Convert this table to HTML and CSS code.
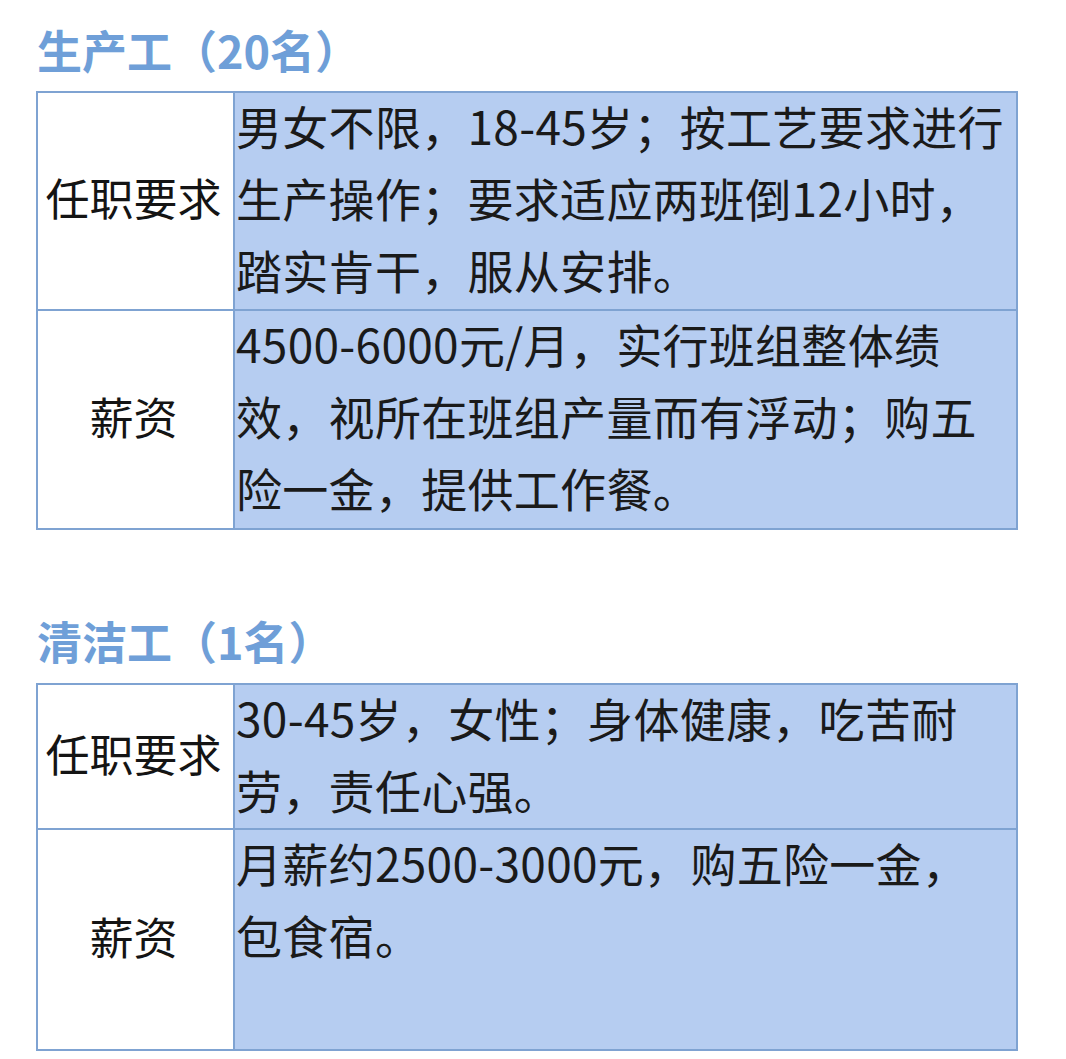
FILE: index.html
```html
<!DOCTYPE html>
<html lang="zh-CN">
<head>
<meta charset="utf-8">
<title>招聘岗位</title>
<link rel="stylesheet" href="styles.css">
</head>
<body>
<div class="page">
  <section class="job job-first">
    <h2 class="job-title">生产工（20名）</h2>
    <table class="job-table">
      <tr class="row-a">
        <td class="label">任职要求</td>
        <td class="content"><div class="text">男女不限，18-45岁；按工艺要求进行<br>生产操作；要求适应两班倒12小时，<br>踏实肯干，服从安排。</div></td>
      </tr>
      <tr class="row-b">
        <td class="label">薪资</td>
        <td class="content"><div class="text">4500-6000元/月，实行班组整体绩<br>效，视所在班组产量而有浮动；购五<br>险一金，提供工作餐。</div></td>
      </tr>
    </table>
  </section>
  <section class="job job-second">
    <h2 class="job-title">清洁工（1名）</h2>
    <table class="job-table">
      <tr class="row-c">
        <td class="label">任职要求</td>
        <td class="content"><div class="text">30-45岁，女性；身体健康，吃苦耐<br>劳，责任心强。</div></td>
      </tr>
      <tr class="row-d">
        <td class="label">薪资</td>
        <td class="content"><div class="text">月薪约2500-3000元，购五险一金，<br>包食宿。</div></td>
      </tr>
    </table>
  </section>
</div>
</body>
</html>
```
FILE: styles.css
```css
html, body {
  margin: 0;
  padding: 0;
  background: #ffffff;
}

body {
  font-family: "Noto Sans CJK SC", "Noto Sans", sans-serif;
  color: #1c1c1c;
}

.page {
  padding-left: 36px;
  width: 982px;
}

.job-title {
  margin: 0;
  padding-left: 1px;
  font-size: 45px;
  line-height: 60px;
  font-weight: 700;
  color: #6f9fd8;
  white-space: nowrap;
}

.job-first .job-title {
  margin-top: 20px;
  margin-bottom: 11px;
}

.job-second .job-title {
  margin-top: 81px;
  margin-bottom: 12px;
}

.job-table {
  width: 982px;
  border-collapse: collapse;
  border: 2px solid #7fa3d2;
  table-layout: fixed;
}

.job-table td {
  border: 2px solid #7fa3d2;
  padding: 0;
}

.label {
  width: 191px;
  background: #ffffff;
  text-align: center;
  vertical-align: middle;
  font-size: 44px;
  line-height: 60px;
  white-space: nowrap;
  color: #141414;
}

.job-table td.label {
  padding-bottom: 8px;
  padding-right: 4px;
}

.content {
  background: #b6cdf1;
  vertical-align: top;
  font-size: 46px;
  line-height: 72px;
  white-space: nowrap;
  color: #1a1a1a;
}

.job-table td.content {
  padding-left: 1px;
}

.content .text {
  margin-top: -4px;
  letter-spacing: 0.3px;
}

.row-a .content { height: 216px; }
.row-b .content { height: 217px; }
.row-c .content { height: 143px; }
.row-d .content { height: 219px; }
```
